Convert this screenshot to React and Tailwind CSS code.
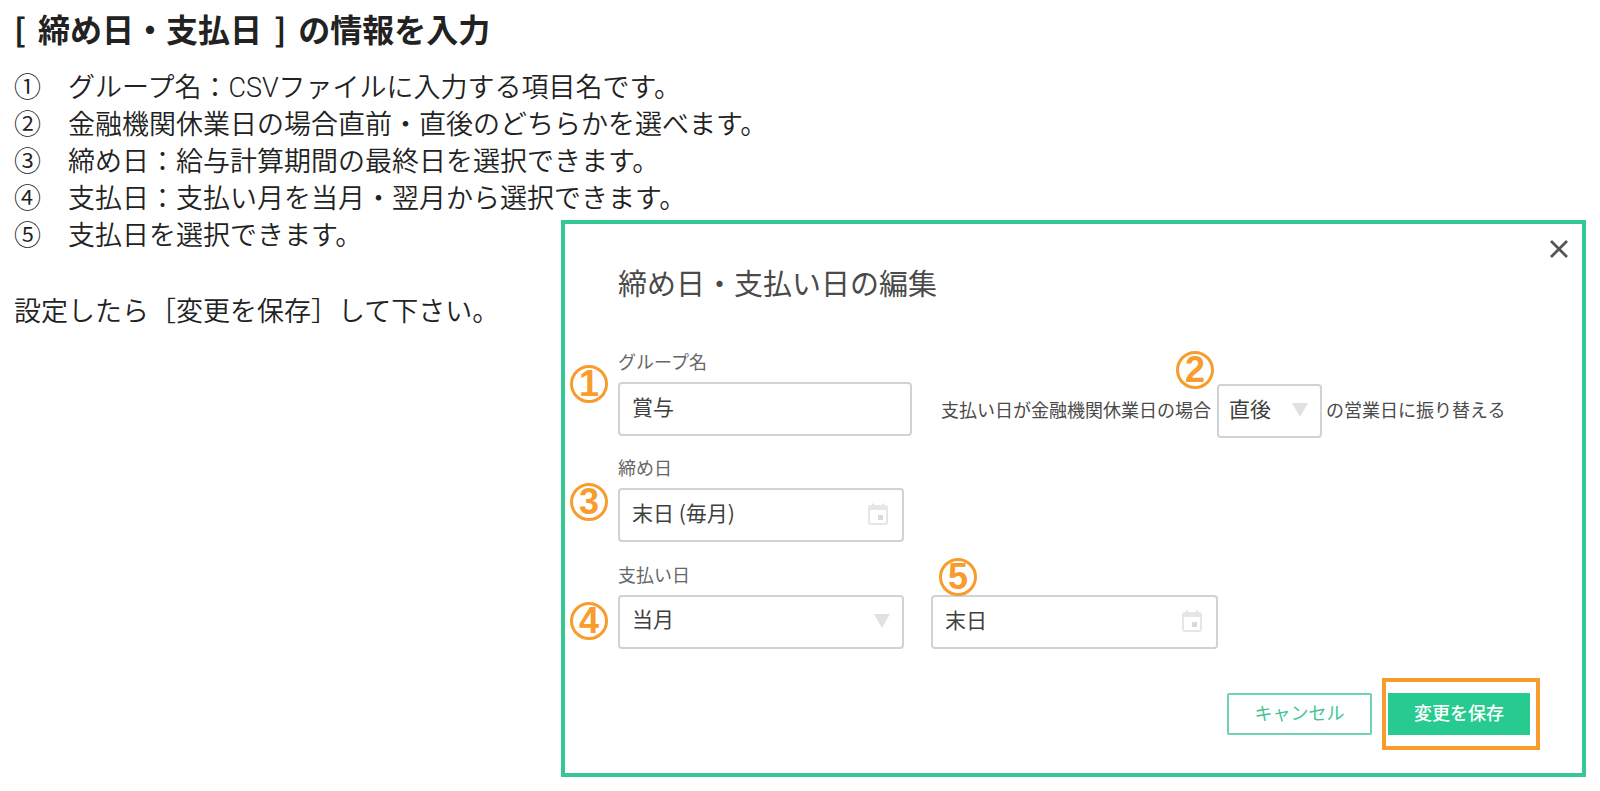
import React, { useState } from 'react'

const steps = [
  { mark: '①', text: 'グループ名：CSVファイルに入力する項目名です。' },
  { mark: '②', text: '金融機関休業日の場合直前・直後のどちらかを選べます。' },
  { mark: '③', text: '締め日：給与計算期間の最終日を選択できます。' },
  { mark: '④', text: '支払日：支払い月を当月・翌月から選択できます。' },
  { mark: '⑤', text: '支払日を選択できます。' },
];

const fieldStyle = 'block w-full h-[54px] rounded border-2 border-[#d2d2d2] bg-white pb-1.5 text-[21px] text-[#404040] outline-none';

function Badge({ number, className }) {
  return (
    <span className={`absolute flex size-[38px] items-center justify-center rounded-full border-3 border-[#f79c2d] font-['Liberation_Sans',sans-serif] text-4xl leading-none font-bold text-[#f79c2d] ${className}`}>
      {number}
    </span>
  )
}

function CalendarIcon() {
  return (
    <svg viewBox="0 0 20 22" className="h-[22px] w-5" fill="none">
      <path d="M5 0.5v4M15 0.5v4" stroke="#e0e2e4" strokeWidth="2" />
      <rect x="1" y="3" width="18" height="18" rx="2" stroke="#e4e6e8" strokeWidth="2" />
      <path d="M1 3h18v4H1z" fill="#e4e6e8" />
      <rect x="10" y="12" width="5" height="5" fill="#d8dadd" />
    </svg>
  )
}

function SelectField({ id, value, onChange, options, className }) {
  return (
    <div className="relative">
      <select
        id={id}
        value={value}
        onChange={(e) => onChange(e.target.value)}
        className={`${fieldStyle} appearance-none ${className}`}
      >
        {options.map((option) => (
          <option key={option} value={option}>{option}</option>
        ))}
      </select>
      <svg viewBox="0 0 16 14" className="pointer-events-none absolute top-[19px] right-3.5 h-3.5 w-4">
        <path d="M0 0h16L8 14z" fill="#dfe1e4" />
      </svg>
    </div>
  )
}

function DateField({ id, label, value, onChange }) {
  return (
    <div className="relative">
      <input
        id={id}
        type="text"
        aria-label={label}
        value={value}
        onChange={(e) => onChange(e.target.value)}
        className={`${fieldStyle} pl-3`}
      />
      <button type="button" aria-label="カレンダー" className="absolute top-[15px] right-4">
        <CalendarIcon />
      </button>
    </div>
  )
}

function EditDialog() {
  const [groupName, setGroupName] = useState('賞与');
  const [shift, setShift] = useState('直後');
  const [closingDay, setClosingDay] = useState('末日 (毎月)');
  const [payMonth, setPayMonth] = useState('当月');
  const [payDay, setPayDay] = useState('末日');

  const labelStyle = 'mb-[9px] block text-lg leading-[23px] text-[#666666]';

  return (
    <form
      className="relative mt-[220px] min-w-0 flex-1 border-4 border-[#36c893] bg-white pt-[38px] pb-[23px] pl-[53px] whitespace-nowrap text-[#4a4a4a]"
      onSubmit={(e) => e.preventDefault()}
    >
      <button type="button" aria-label="閉じる" className="absolute top-4 right-3.5">
        <svg viewBox="0 0 18 18" className="size-[18px]" stroke="#555555" strokeWidth="2.8">
          <path d="M1 1l16 16M17 1L1 17" />
        </svg>
      </button>

      <h2 className="mb-12 text-[29px] leading-10">締め日・支払い日の編集</h2>

      <div className="flex items-start">
        <div className="relative w-[294px]">
          <Badge number="1" className="top-[15px] -left-12" />
          <label htmlFor="group" className={labelStyle}>グループ名</label>
          <input
            id="group"
            type="text"
            value={groupName}
            onChange={(e) => setGroupName(e.target.value)}
            className={`${fieldStyle} pl-3`}
          />
        </div>
        <div className="mt-[34px] ml-[29px] flex items-center text-lg">
          <label htmlFor="shift" className="pb-1">支払い日が金融機関休業日の場合</label>
          <div className="relative mr-1 ml-1.5 w-[105px]">
            <Badge number="2" className="-top-[33px] -left-[41px] z-10" />
            <SelectField id="shift" value={shift} onChange={setShift} options={['直前', '直後']} className="pl-2.5" />
          </div>
          <span className="pb-1">の営業日に振り替える</span>
        </div>
      </div>

      <div className="relative mt-[18px] w-[286px]">
        <Badge number="3" className="top-[27px] -left-12" />
        <label htmlFor="closing" className={labelStyle}>締め日</label>
        <DateField id="closing" value={closingDay} onChange={setClosingDay} />
      </div>

      <div className="mt-[21px] flex items-end gap-[27px]">
        <div className="relative w-[286px]">
          <Badge number="4" className="top-[39px] -left-12" />
          <label htmlFor="month" className={labelStyle}>支払い日</label>
          <SelectField id="month" value={payMonth} onChange={setPayMonth} options={['当月', '翌月']} className="pl-3" />
        </div>
        <div className="relative w-[287px]">
          <Badge number="5" className="-top-[37px] left-2 z-10" />
          <DateField id="day" label="支払日" value={payDay} onChange={setPayDay} />
        </div>
      </div>

      <div className="mt-[29px] mr-[42px] flex items-center justify-end gap-2.5 text-lg">
        <button type="button" className="h-[42px] w-[145px] rounded-xs border-2 border-[#6fd3ae] pb-1 text-[#45c596]">
          キャンセル
        </button>
        <div className="border-4 border-[#f79c2d] py-[11px] pr-1.5 pl-0.5">
          <button type="submit" className="block h-[42px] w-[142px] bg-[#28cb8f] pb-1 font-medium text-white">
            変更を保存
          </button>
        </div>
      </div>
    </form>
  )
}

function App() {
  return (
    <main className="flex items-start bg-white px-3.5 font-['Noto_Sans_CJK_JP',sans-serif] text-[#222222]">
      <section className="w-[547px] shrink-0 whitespace-nowrap">
        <h1 className="flex gap-3 pt-1 text-[32px] leading-[48px] font-bold">
          <span>[</span>
          <span>締め日・支払日</span>
          <span>]</span>
          <span>の情報を入力</span>
        </h1>
        <ol className="mt-[18px] font-['Roboto','Noto_Sans_CJK_JP',sans-serif] text-[27px] leading-[37px] font-[350]">
          {steps.map((step) => (
            <li key={step.mark} className="flex gap-[27px]">
              <span>{step.mark}</span>
              <span>{step.text}</span>
            </li>
          ))}
        </ol>
        <p className="mt-9 text-[27px] leading-[37px] font-[350]">設定したら［変更を保存］して下さい。</p>
      </section>
      <EditDialog />
    </main>
  )
}

export default App
